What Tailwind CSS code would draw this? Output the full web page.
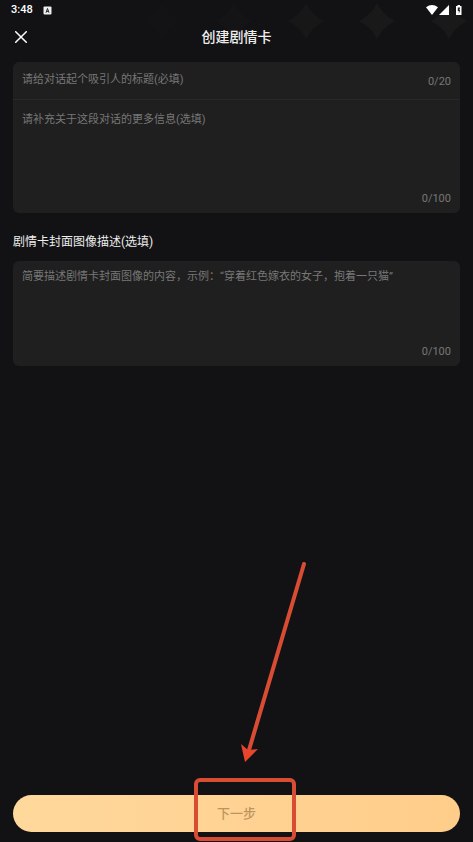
<!DOCTYPE html>
<html lang="zh-CN">
<head>
<meta charset="utf-8">
<meta name="viewport" content="width=device-width, initial-scale=1">
<title>创建剧情卡</title>
<script src="https://cdn.jsdelivr.net/npm/@tailwindcss/browser@4"></script>
</head>
<body class="bg-[#121214] font-['Roboto','Noto_Sans_CJK_SC',sans-serif] text-white">
<div class="relative flex min-h-screen flex-col overflow-hidden">
  <!-- Decorative stars behind the header -->
  <svg class="pointer-events-none absolute top-0 right-0" width="329" height="42" viewBox="0 0 329 42" fill="#191919" aria-hidden="true">
    <defs><path id="star" d="M0-18Q6-6 18 0Q6 6 0 18Q-6 6-18 0Q-6-6 0-18Z"/></defs>
    <use href="#star" x="18" y="21" opacity=".25"/>
    <use href="#star" x="90" y="21" opacity=".45"/>
    <use href="#star" x="162" y="21" opacity=".75"/>
    <use href="#star" x="233" y="21"/>
    <use href="#star" x="305" y="21"/>
  </svg>

  <div class="relative flex h-5 items-center justify-between pr-[10px] pl-[11px]">
    <div class="flex items-center gap-[10px]">
      <span class="text-[11px] leading-5 font-medium">3:48</span>
      <svg width="9" height="9" viewBox="0 0 9 9" aria-hidden="true"><rect x=".5" y=".5" width="8" height="8" rx="1" fill="#eee"/><path d="M3 6.700L4.500 2.500L6 6.700M3.500 5.400H5.500" fill="none" stroke="#222" stroke-width="1"/></svg>
    </div>
    <svg width="38" height="12" viewBox="0 0 38 12" fill="#fff" aria-hidden="true">
      <path d="M1 3.200Q7-1.200 13 3.200L7 11Z"/>
      <path d="M24 1V11H14Z"/>
      <path d="M31 2H32.500V1H35V2H36.500V11H31Z"/><path d="M35.200 3.500H32.800V7H33.800V9.700L35.200 6H34.400Z" fill="#222"/>
    </svg>
  </div>

  <header class="relative flex h-[34px] items-center justify-center">
    <button type="button" aria-label="关闭" class="absolute left-[15px] flex size-3 items-center justify-center">
      <svg width="12" height="12" viewBox="0 0 12 12" fill="none" stroke="#fff" stroke-width="1.500" stroke-linecap="round"><path d="M.7.7L11.300 11.300M11.300.7L.7 11.300"/></svg>
    </button>
    <h1 class="text-[14px] leading-5 font-medium text-[#eee]">创建剧情卡</h1>
  </header>

  <main class="relative flex flex-1 flex-col px-[13px] pt-2">
    <section class="rounded-md bg-[#1f1f1f] text-[11px] leading-4 text-[#777]">
      <div class="flex h-[38px] border-b border-[#282828] px-[9px]">
        <input type="text" maxlength="20" aria-label="标题" placeholder="请给对话起个吸引人的标题(必填)" class="h-[34px] min-w-0 flex-1 bg-transparent outline-none placeholder:text-[#777]">
        <span class="pt-3">0/20</span>
      </div>
      <div class="flex h-[113px] flex-col px-[9px] pt-3 pb-[6px]">
        <textarea maxlength="100" aria-label="更多信息" placeholder="请补充关于这段对话的更多信息(选填)" class="w-full flex-1 resize-none bg-transparent outline-none placeholder:text-[#777]"></textarea>
        <span class="self-end">0/100</span>
      </div>
    </section>

    <label for="cover" class="mt-[19px] text-[12px] leading-5 text-[#eee]">剧情卡封面图像描述(选填)</label>
    <section class="mt-[9px] flex h-[105px] flex-col rounded-md bg-[#1f1f1f] px-[9px] pt-2 pb-[6px] text-[11px] leading-4 text-[#777]">
      <textarea id="cover" maxlength="100" placeholder="简要描述剧情卡封面图像的内容，示例：“穿着红色嫁衣的女子，抱着一只猫”" class="w-full flex-1 resize-none bg-transparent outline-none placeholder:text-[#777]"></textarea>
      <span class="self-end">0/100</span>
    </section>
  </main>

  <footer class="relative px-[13px] pb-[10px]">
    <button type="button" class="block h-[37px] w-full rounded-full bg-linear-to-r from-[#ffd89c] to-[#ffcd8a] text-[13px] leading-5 font-medium text-[#bd935f]">下一步</button>
    <!-- Arrow and frame that point out the button -->
    <svg class="pointer-events-none absolute bottom-0 left-1/2 -ml-11" width="114" height="282" viewBox="0 0 114 282" fill="none" stroke="#d84c34" aria-hidden="true">
      <rect x="3" y="220" width="98" height="59" rx="4" stroke-width="4"/>
      <path d="M111 4L56 190" stroke-width="4" stroke-linecap="round"/>
      <path d="M52 202L48 184L55 190L65 189Z" fill="#e8452c" stroke="none"/>
    </svg>
  </footer>
</div>
</body>
</html>
